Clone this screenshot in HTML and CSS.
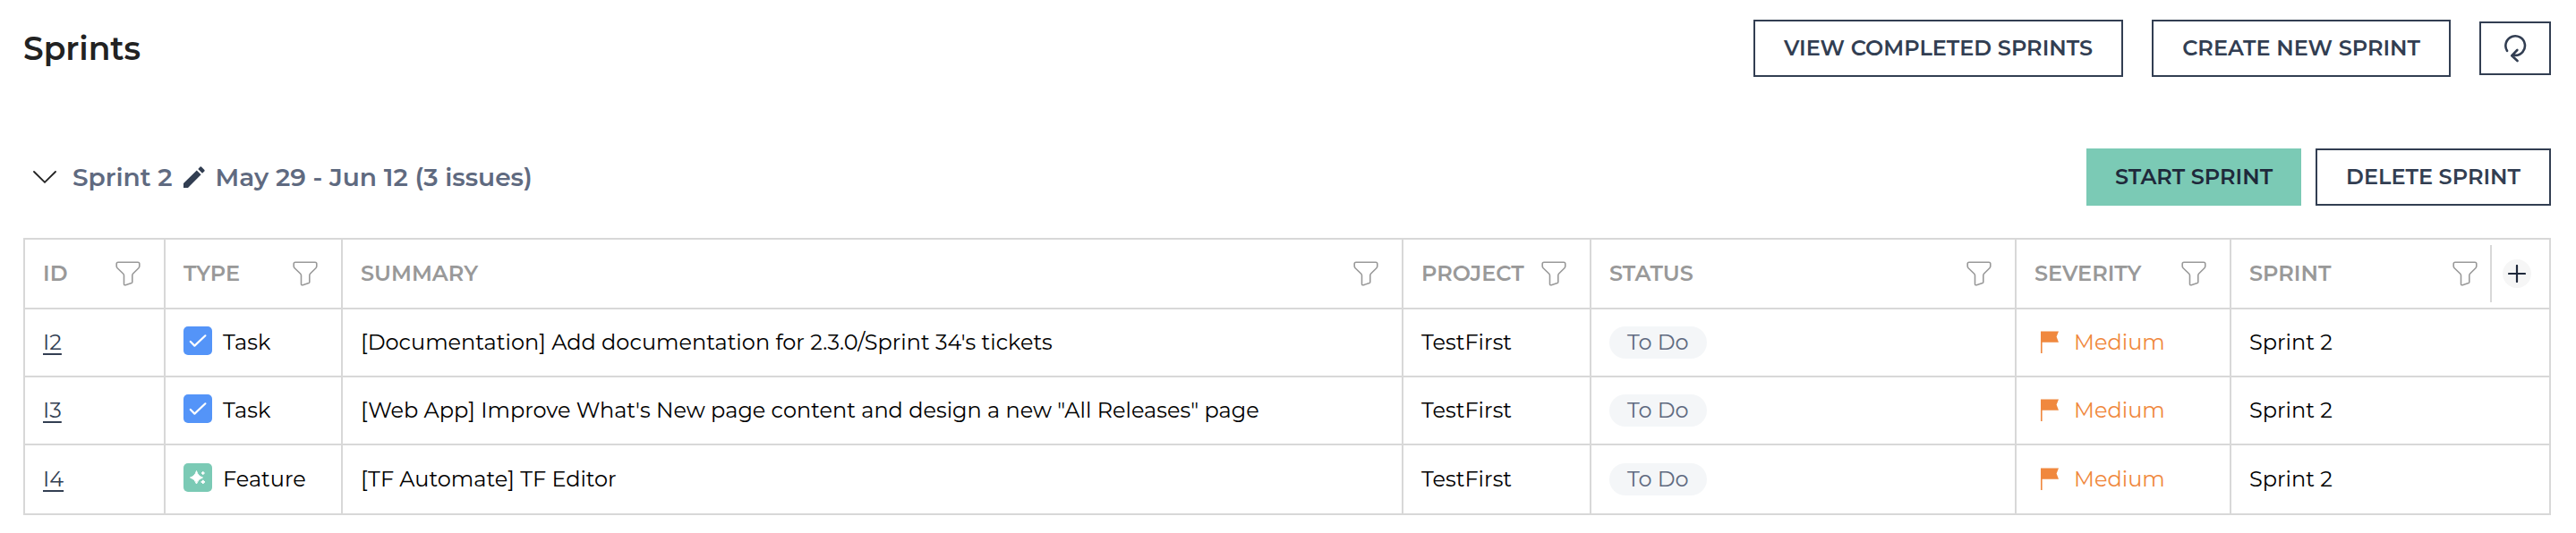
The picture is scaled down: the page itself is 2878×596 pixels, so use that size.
FILE: index.html
```html
<!DOCTYPE html>
<html lang="en">
<head>
<meta charset="utf-8">
<title>Sprints</title>
<link rel="stylesheet" href="styles.css">
</head>
<body>
<svg class="defs" aria-hidden="true">
  <symbol id="funnel" viewBox="0 0 28 28"><path d="M3 1.200H25Q26.800 1.200 26.800 3V5.500Q26.800 6.700 25.900 7.700L19.600 14Q18.800 14.900 18.800 16V23.200Q18.800 24.200 17.900 24.600L11.300 26.700Q9.500 27.200 9.500 25.500V16Q9.500 14.900 8.600 14L2.100 7.700Q1.200 6.700 1.200 5.500V3Q1.200 1.200 3 1.200Z" fill="none" stroke="#999" stroke-width="1.600" stroke-linejoin="round"/></symbol>
  <symbol id="check" viewBox="0 0 32 32"><rect width="32" height="32" rx="5" fill="#5494f8"/><path d="M7.800 17L12.400 21.600L24.400 10.300" fill="none" stroke="#fff" stroke-width="2.200" stroke-linecap="round" stroke-linejoin="round"/></symbol>
  <symbol id="sparkle" viewBox="0 0 32 32"><rect width="32" height="32" rx="5" fill="#7bcab5"/><path d="M14.500 8.500Q16 14.500 21.500 16Q16 17.500 14.500 23Q13 17.500 7.500 16Q13 14.500 14.500 8.500ZM21.800 9.300Q22.300 10.500 23.500 11Q22.300 11.500 21.800 12.700Q21.300 11.500 20.100 11Q21.300 10.500 21.800 9.300ZM21.800 18.800Q22.300 20.400 24 20.900Q22.300 21.400 21.800 23Q21.300 21.400 19.600 20.900Q21.300 20.400 21.800 18.800Z" fill="#fff" stroke="#fff"/></symbol>
  <symbol id="flag" viewBox="0 0 22 26"><path d="M1 .5H21L18.600 6.500L21 12.800H2.600V25H1Z" fill="#f0883e"/></symbol>
</svg>
<main class="page">
  <header class="bar">
    <h1 class="title">Sprints</h1>
    <div class="actions actions-wide">
      <button class="btn">VIEW COMPLETED SPRINTS</button>
      <button class="btn">CREATE NEW SPRINT</button>
      <button class="btn btn-icon" aria-label="Refresh"><svg width="26" height="32" viewBox="0 0 26 32" fill="none" stroke="#323e52" stroke-width="2.600" stroke-linecap="round" stroke-linejoin="round"><path d="M4 18.800A10.800 10.800 0 1 1 13 23.900L9.500 24.200M15.300 18L9.300 24.200L15.500 30"/></svg></button>
    </div>
  </header>
  <section class="sprint">
    <div class="bar">
      <div class="sprint-name">
        <button class="plain toggle" aria-label="Collapse sprint"><svg width="26" height="14" viewBox="0 0 26 14"><path d="M1 1L13 12.800L25 1" fill="none" stroke="#222" stroke-width="1.800" stroke-linecap="round"/></svg></button>
        <h2 class="subtitle">Sprint 2</h2>
        <button class="plain" aria-label="Edit sprint"><svg width="24" height="24" viewBox="0 0 24 24"><path d="M0 24V19L14.800 4.400L19.600 9.200L5 24ZM16.300 3L18.600 .6Q19.300 0 20 .6L23.400 4Q24 4.700 23.400 5.400L21 7.800Z" fill="#323e52"/></svg></button>
        <span class="subtitle">May 29 - Jun 12 (3 issues)</span>
      </div>
      <div class="actions">
        <button class="btn btn-primary">START SPRINT</button>
        <button class="btn">DELETE SPRINT</button>
      </div>
    </div>
    <table class="issues">
      <colgroup><col class="c-id"><col class="c-type"><col class="c-summary"><col class="c-project"><col class="c-status"><col class="c-severity"><col class="c-sprint"></colgroup>
      <thead>
        <tr>
          <th><div class="head">ID<button class="plain" aria-label="Filter ID"><svg class="funnel"><use href="#funnel"/></svg></button></div></th>
          <th><div class="head">TYPE<button class="plain" aria-label="Filter type"><svg class="funnel"><use href="#funnel"/></svg></button></div></th>
          <th><div class="head">SUMMARY<button class="plain" aria-label="Filter summary"><svg class="funnel"><use href="#funnel"/></svg></button></div></th>
          <th><div class="head">PROJECT<button class="plain" aria-label="Filter project"><svg class="funnel"><use href="#funnel"/></svg></button></div></th>
          <th><div class="head">STATUS<button class="plain" aria-label="Filter status"><svg class="funnel"><use href="#funnel"/></svg></button></div></th>
          <th><div class="head">SEVERITY<button class="plain" aria-label="Filter severity"><svg class="funnel"><use href="#funnel"/></svg></button></div></th>
          <th><div class="head">SPRINT<span class="tools"><button class="plain" aria-label="Filter sprint"><svg class="funnel"><use href="#funnel"/></svg></button><span class="add-wrap"><button class="plain add" aria-label="Add column"><svg width="20" height="20" viewBox="0 0 20 20"><path d="M10 1V19M1 10H19" stroke="#1f293b" stroke-width="2.200" stroke-linecap="round"/></svg></button></span></span></div></th>
        </tr>
      </thead>
      <tbody>
        <tr>
          <td><a class="id" href="#I2">I2</a></td>
          <td><div class="type"><svg class="tile"><use href="#check"/></svg>Task</div></td>
          <td>[Documentation] Add documentation for 2.3.0/Sprint 34's tickets</td>
          <td>TestFirst</td>
          <td><span class="pill">To Do</span></td>
          <td><div class="severity"><svg class="flag"><use href="#flag"/></svg>Medium</div></td>
          <td>Sprint 2</td>
        </tr>
        <tr>
          <td><a class="id" href="#I3">I3</a></td>
          <td><div class="type"><svg class="tile"><use href="#check"/></svg>Task</div></td>
          <td>[Web App] Improve What's New page content and design a new "All Releases" page</td>
          <td>TestFirst</td>
          <td><span class="pill">To Do</span></td>
          <td><div class="severity"><svg class="flag"><use href="#flag"/></svg>Medium</div></td>
          <td>Sprint 2</td>
        </tr>
        <tr>
          <td><a class="id" href="#I4">I4</a></td>
          <td><div class="type"><svg class="tile"><use href="#sparkle"/></svg>Feature</div></td>
          <td>[TF Automate] TF Editor</td>
          <td>TestFirst</td>
          <td><span class="pill">To Do</span></td>
          <td><div class="severity"><svg class="flag"><use href="#flag"/></svg>Medium</div></td>
          <td>Sprint 2</td>
        </tr>
      </tbody>
    </table>
  </section>
</main>
</body>
</html>
```
FILE: styles.css
```css
* { box-sizing: border-box; }
body {
  margin: 0;
  background: #fff;
  color: #000;
  font: 400 24px/32px Montserrat, Inter, sans-serif;
}
.defs { position: absolute; width: 0; height: 0; }
.page { padding: 22px 28px 20px 26px; }
.bar { display: flex; align-items: center; justify-content: space-between; }
.title { margin: 0; font-size: 36px; font-weight: 600; line-height: 44px; color: #222; }
.actions { display: flex; align-items: center; gap: 16px; }
.actions-wide { gap: 32px; }
.btn {
  height: 64px;
  padding: 0 32px;
  border: 2px solid #323e52;
  background: #fff;
  color: #323e52;
  font: 600 24px/32px Montserrat, Inter, sans-serif;
}
.btn-primary { border: 0; background: #7bcab5; color: #1f293b; }
.btn-icon { display: flex; align-items: center; justify-content: center; width: 80px; height: 60px; padding: 0; }
.plain { display: flex; padding: 0; border: 0; background: none; }
.sprint { margin-top: 80px; }
.sprint-name { display: flex; align-items: center; gap: 12px; padding-left: 11px; }
.toggle { margin-right: 6px; }
.subtitle { margin: 0; font-size: 28px; font-weight: 600; line-height: 36px; color: #5f6a80; }
.issues { width: 100%; margin-top: 36px; border-collapse: collapse; table-layout: fixed; }
.c-id { width: 157px; }
.c-type { width: 198px; }
.c-project { width: 210px; }
.c-status { width: 475px; }
.c-severity { width: 240px; }
.c-sprint { width: 357px; }
.issues th, .issues td { height: 76px; padding: 0 20px; border: 2px solid #d8d8d8; text-align: left; white-space: nowrap; }
.issues th { height: 78px; padding-right: 26px; color: #999; font-weight: 600; }
.issues th:last-child { padding-right: 20px; }
.issues tr:last-child td { height: 78px; }
.head, .tools { display: flex; align-items: center; justify-content: space-between; }
.funnel { width: 28px; height: 28px; }
.tools { gap: 14px; }
.add-wrap { display: flex; align-items: center; height: 64px; padding-left: 12px; border-left: 2px solid #d8d8d8; }
.add { width: 32px; height: 32px; align-items: center; justify-content: center; border-radius: 50%; background: #f6f6f6; }
.id { color: #323e52; text-underline-offset: 4px; }
.type { display: flex; align-items: center; gap: 12px; }
.tile { width: 32px; height: 32px; margin-bottom: 4px; }
.pill { display: inline-block; padding: 2px 20px; border-radius: 18px; background: #f4f6f8; color: #5f6a80; }
.severity { display: flex; align-items: center; gap: 16px; padding-left: 6px; color: #f0883e; }
.flag { width: 22px; height: 26px; }
```
